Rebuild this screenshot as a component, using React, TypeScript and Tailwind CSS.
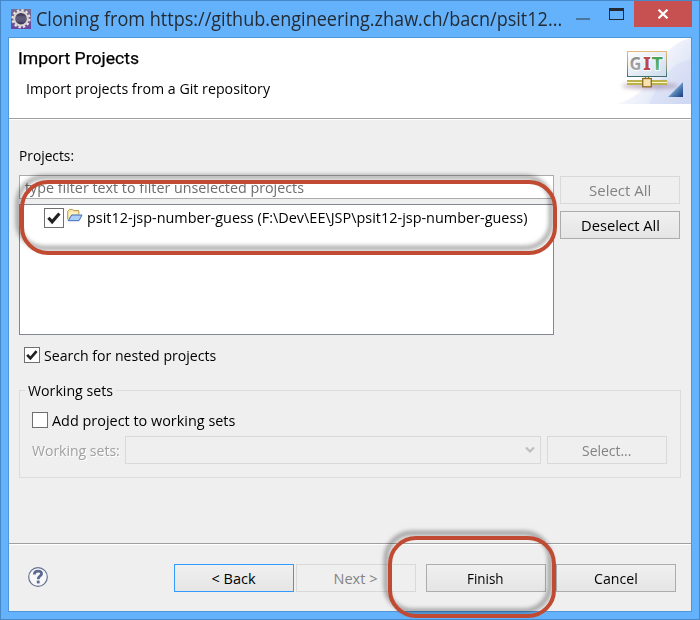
import { useLayoutEffect, useRef, useState } from 'react';
import type { ReactNode } from 'react';
import clsx from 'clsx';

// Text condensed or widened to fill the width of its own box.
function Fit({ className, children }: { className: string; children: ReactNode }) {
  const box = useRef<HTMLSpanElement>(null);
  const ink = useRef<HTMLSpanElement>(null);
  const [scale, setScale] = useState(1);
  useLayoutEffect(() => {
    if (box.current && ink.current) {
      setScale(box.current.offsetWidth / ink.current.offsetWidth);
    }
  }, []);
  return (
    <span ref={box} className={clsx('block shrink-0 whitespace-nowrap', className)}>
      <span ref={ink} className="inline-block origin-left" style={{ transform: `scaleX(${scale})` }}>
        {children}
      </span>
    </span>
  );
}

function Button({ label, width, disabled, focused }: { label: string; width: string; disabled?: boolean; focused?: boolean }) {
  return (
    <button
      className={clsx(
        'flex h-7 w-[120px] shrink-0 items-center justify-center border pt-0.5 pr-px',
        disabled && 'border-[#d9d9d9] bg-[#efefef] text-[#838383]',
        !disabled && 'bg-linear-to-b from-[#f0f0f0] to-[#e5e5e5] text-black',
        !disabled && (focused ? 'border-[#3399ff]' : 'border-[#acacac]'),
      )}
    >
      <Fit className={width}>{label}</Fit>
    </button>
  );
}

function Checkbox({ checked, large }: { checked?: boolean; large?: boolean }) {
  return (
    <span
      className={clsx(
        'flex shrink-0 items-center justify-center border border-[#707070] bg-white',
        large ? 'size-5' : 'size-4',
      )}
    >
      {checked && (
        <svg viewBox="0 0 12 12" className={large ? 'size-[14px]' : 'size-3'}>
          <path d="M1.2 5.8 L4.4 9.3 L10.6 2.1" fill="none" stroke="#212121" strokeWidth="2.7" />
        </svg>
      )}
    </span>
  );
}

function AppIcon() {
  return (
    <svg viewBox="0 0 20 20" className="size-5 shrink-0">
      <defs>
        <linearGradient id="app-bg" x1="0" y1="0" x2="0" y2="1">
          <stop offset="0" stopColor="#756f91" />
          <stop offset="1" stopColor="#6845a0" />
        </linearGradient>
        <linearGradient id="app-core" x1="0" y1="0" x2="0" y2="1">
          <stop offset="0" stopColor="#33304b" />
          <stop offset="0.5" stopColor="#5a5675" />
          <stop offset="1" stopColor="#332a57" />
        </linearGradient>
      </defs>
      <rect width="20" height="20" fill="url(#app-bg)" />
      <circle cx="10" cy="9.7" r="8.4" fill="none" stroke="#e6e1d9" strokeWidth="2.4" strokeDasharray="2.4 2" />
      <circle cx="10" cy="9.7" r="6.8" fill="url(#app-core)" stroke="#d9d4ce" strokeWidth="2" />
      <path d="M5 8h10M4.6 10h10.8M5 12h10" stroke="#77748f" strokeWidth="0.6" />
    </svg>
  );
}

function GitBanner() {
  return (
    <svg viewBox="0 0 82 66" className="h-[66px] w-[82px] shrink-0">
      <defs>
        <linearGradient id="sky" x1="0.25" y1="0.3" x2="1" y2="0.8">
          <stop offset="0" stopColor="#ffffff" />
          <stop offset="1" stopColor="#d5ddf4" />
        </linearGradient>
        <linearGradient id="frame" x1="0" y1="0" x2="0" y2="1">
          <stop offset="0" stopColor="#e7b67b" />
          <stop offset="0.5" stopColor="#a5a18a" />
          <stop offset="1" stopColor="#3f6f6c" />
        </linearGradient>
        <linearGradient id="panel" x1="0" y1="0" x2="1" y2="1">
          <stop offset="0" stopColor="#ffffff" />
          <stop offset="1" stopColor="#ccdcec" />
        </linearGradient>
        <linearGradient id="corner" x1="0" y1="0" x2="1" y2="1">
          <stop offset="0.3" stopColor="#a9c8e2" />
          <stop offset="0.65" stopColor="#4877af" />
          <stop offset="1" stopColor="#173d7d" />
        </linearGradient>
        <linearGradient id="gray" x1="0" y1="0" x2="0" y2="1">
          <stop offset="0" stopColor="#828282" />
          <stop offset="1" stopColor="#b5b5b5" />
        </linearGradient>
        <linearGradient id="green" x1="0" y1="0" x2="0" y2="1">
          <stop offset="0" stopColor="#3f994b" />
          <stop offset="1" stopColor="#7dbb7d" />
        </linearGradient>
        <filter id="soft" x="-20%" y="-100%" width="140%" height="300%">
          <feGaussianBlur stdDeviation="2" />
        </filter>
      </defs>
      <path d="M82 0 C62 4 52 20 42 42 C32 56 20 62 8 66 H82 Z" fill="url(#sky)" />
      <path d="M82 21 C60 26 50 42 40 66 H82 Z" fill="#c6d2f1" opacity="0.3" />
      <ellipse cx="41" cy="48" rx="28" ry="3" fill="#997b9c" opacity="0.6" filter="url(#soft)" />
      <rect x="18.5" y="13.5" width="39" height="25" fill="url(#panel)" stroke="url(#frame)" />
      <g fontFamily="Noto Sans, Open Sans, sans-serif" fontWeight="700" fontSize="17" stroke="#fff" strokeWidth="1.6" paintOrder="stroke">
        <text x="20.5" y="32" fill="url(#gray)" textLength="12" lengthAdjust="spacingAndGlyphs">G</text>
        <text x="34" y="32" fill="#bb4850" textLength="8" lengthAdjust="spacingAndGlyphs">I</text>
        <text x="42.5" y="32" fill="url(#green)" textLength="11.5" lengthAdjust="spacingAndGlyphs">T</text>
      </g>
      <path d="M36.500 39v3M39.500 39v3" stroke="#857839" strokeWidth="1.2" />
      <path d="M18 43H58M18 46H58" stroke="#bdb14d" strokeWidth="2" />
      <path d="M18 44.500H58" stroke="#fff9c5" strokeWidth="1" />
      <rect x="33.700" y="40.500" width="8.600" height="8.300" fill="#f7e2b2" stroke="#8e6c24" strokeWidth="1.300" />
      <path d="M74 44V59H59Z" fill="url(#corner)" />
    </svg>
  );
}

function FolderIcon() {
  return (
    <svg viewBox="0 0 16 14" className="h-[14px] w-4 shrink-0">
      <path d="M.7 11.500V3.200L2.500 1.400H5.500L7 2.600H11.800V6.500" fill="#fbe5a2" stroke="#bd9a51" />
      <path d="M1.800 4H11V6.500H4.200L1.600 10Z" fill="#fff1bd" />
      <path d="M4.700 7H15L12 12.700H1.200Z" fill="#a9cffa" stroke="#416eb5" />
    </svg>
  );
}

function HelpIcon() {
  return (
    <svg viewBox="0 0 20 20" className="mb-0.5 size-5 shrink-0">
      <circle cx="10" cy="10" r="9.300" fill="#f8f8fa" stroke="#64728f" strokeWidth="1.200" />
      <path d="M6.300 7.600C6.300 4.900 8 4.200 10.100 4.200C12.200 4.200 13.600 5.100 13.600 6.900C13.600 9 10.200 9 10.200 12.200" fill="none" stroke="#5c6990" strokeWidth="2.700" />
      <rect x="8.800" y="13.600" width="2.800" height="2.800" fill="#5c6990" />
    </svg>
  );
}

export default function App() {
  return (
    <div className="relative flex h-[620px] w-[700px] flex-col overflow-hidden border border-[#4788c8] bg-[#64b2fc] font-['Open_Sans','Noto_Sans',sans-serif] text-[14.5px] leading-5 text-black">
      <header className="flex h-9 shrink-0 items-start pl-[10px] pr-[7px]">
        <div className="flex pt-2">
          <AppIcon />
        </div>
        <div className="ml-[5px] pt-[5px] text-[19.5px] leading-[26px] text-[#242b33]">
          <Fit className="w-[526px]">Cloning from https://github.engineering.zhaw.ch/bacn/psit12...</Fit>
        </div>
        <div className="mt-[17px] ml-[14px] h-0.5 w-[14px] bg-[#4b779f]" />
        <div className="mt-[7px] ml-[19px] h-3 w-[15px] border border-t-[3px] border-[#242a30]" />
        <div className="ml-auto flex h-[26px] w-[58px] items-center justify-center bg-[#c75050]">
          <svg viewBox="0 0 12 10" className="mb-px h-[10px] w-3">
            <path d="M1.500 .7L10.500 9.300M10.500 .7L1.500 9.300" stroke="white" strokeWidth="2.200" />
          </svg>
        </div>
      </header>

      <main className="mx-[7px] flex h-[575px] shrink-0 flex-col border border-[#4e96da] bg-[#efefef]">
        <section className="flex h-[82px] shrink-0 justify-between border-b border-white bg-white shadow-[inset_0_-1px_0_#a0a0a0]">
          <div className="pl-[9px] pt-[10px]">
            <div className="font-[Roboto,sans-serif] text-[17px] leading-5 [-webkit-text-stroke:0.25px_black]">
              <Fit className="w-[121px]">Import Projects</Fit>
            </div>
            <div className="mt-[11px] ml-2">
              <Fit className="w-[244px]">Import projects from a Git repository</Fit>
            </div>
          </div>
          <GitBanner />
        </section>

        <section className="flex h-[423px] shrink-0 flex-col px-[10px] pt-[26px]">
          <Fit className="w-[55px]">Projects:</Fit>
          <div className="mt-[9px] flex gap-[6px]">
            <div className="flex w-[535px] flex-col">
              <div className="flex h-6 items-center border border-[#ababab] bg-white pt-0.5 pl-[5px] text-[#6d6d6d]">
                <Fit className="w-[279px]">type filter text to filter unselected projects</Fit>
              </div>
              <div className="mt-[5px] h-[131px] border border-[#828790] bg-white">
                <div className="flex items-start pl-6 pt-[3px]">
                  <Checkbox checked large />
                  <div className="ml-[3px]">
                    <FolderIcon />
                  </div>
                  <div className="ml-1">
                    <Fit className="w-[440px]">psit12-jsp-number-guess (F:\Dev\EE\JSP\psit12-jsp-number-guess)</Fit>
                  </div>
                </div>
              </div>
            </div>
            <div className="flex flex-col gap-[7px] pt-px">
              <Button label="Select All" width="w-[62px]" disabled />
              <Button label="Deselect All" width="w-[79px]" />
            </div>
          </div>
          <label className="mt-[10px] ml-[5px] flex h-5 items-center gap-1">
            <Checkbox checked />
            <Fit className="w-[172px] pt-0.5">Search for nested projects</Fit>
          </label>
          <fieldset className="mt-[15px] h-[98px] w-[662px] border border-[#dcdcdc] pl-3">
            <legend className="-ml-[7px] h-5 px-[3px] pt-px">
              <Fit className="w-[85px]">Working sets</Fit>
            </legend>
            <label className="mt-[10px] flex h-5 items-center gap-1">
              <Checkbox />
              <Fit className="w-[183px] pt-0.5">Add project to working sets</Fit>
            </label>
            <div className="mt-[6px] flex items-center">
              <div className="pt-px text-[#a0a0a0] [text-shadow:1px_1px_0_white]">
                <Fit className="w-[88px]">Working sets:</Fit>
              </div>
              <div className="ml-[5px] flex h-7 w-[416px] items-center justify-end border border-[#d9d9d9] pr-[5px]">
                <svg viewBox="0 0 10 8" className="h-2 w-[10px]">
                  <path d="M1 1.500L5 5.500L9 1.500" fill="none" stroke="#bfbfbf" strokeWidth="2.200" />
                </svg>
              </div>
              <div className="ml-[6px]">
                <Button label="Select..." width="w-[49px]" disabled />
              </div>
            </div>
          </fieldset>
        </section>

        <footer className="flex h-[68px] items-center border-t border-[#a0a0a0] pl-[19px] shadow-[inset_0_1px_0_white]">
          <HelpIcon />
          <div className="ml-[126px] flex gap-0.5">
            <Button label="< Back" width="w-[44px]" focused />
            <Button label="Next >" width="w-[44px]" disabled />
          </div>
          <div className="ml-[10px] flex gap-[10px]">
            <Button label="Finish" width="w-[37px]" />
            <Button label="Cancel" width="w-[44px]" />
          </div>
        </footer>
      </main>

      {/* Highlight rings over the dialog */}
      <div className="absolute left-[19px] top-[179px] h-[75px] w-[537px] rounded-[28px] border-4 border-[#c04a32] drop-shadow-[-4px_-5px_2px_rgba(0,0,0,0.38)]" />
      <div className="absolute left-[387px] top-[535px] h-[82px] w-[168px] rounded-[28px] border-4 border-[#c04a32] drop-shadow-[-4px_-5px_2px_rgba(0,0,0,0.38)]" />
    </div>
  );
}
